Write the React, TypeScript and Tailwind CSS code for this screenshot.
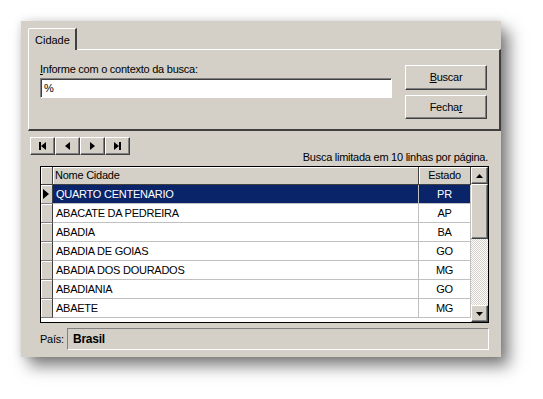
import React from "react";

const rows = [
  { nome: "QUARTO CENTENARIO", uf: "PR" },
  { nome: "ABACATE DA PEDREIRA", uf: "AP" },
  { nome: "ABADIA", uf: "BA" },
  { nome: "ABADIA DE GOIAS", uf: "GO" },
  { nome: "ABADIA DOS DOURADOS", uf: "MG" },
  { nome: "ABADIANIA", uf: "GO" },
  { nome: "ABAETE", uf: "MG" },
];

// classic raised 3d look
const raised =
  "bg-[#d4d0c8] border border-t-white border-l-white border-r-[#404040] border-b-[#404040] shadow-[inset_-1px_-1px_#808080]";

const NavIcon = ({ kind }: { kind: "first" | "prev" | "next" | "last" }) => (
  <svg width="9" height="8" viewBox="0 0 9 8" className="text-black">
    {kind === "first" && (
      <>
        <rect x="1" y="0" width="2" height="8" fill="currentColor" />
        <path d="M3 4 L8 0 L8 8 Z" fill="currentColor" />
      </>
    )}
    {kind === "prev" && <path d="M2 4 L7 0 L7 8 Z" fill="currentColor" />}
    {kind === "next" && <path d="M2 0 L7 4 L2 8 Z" fill="currentColor" />}
    {kind === "last" && (
      <>
        <path d="M1 0 L6 4 L1 8 Z" fill="currentColor" />
        <rect x="6" y="0" width="2" height="8" fill="currentColor" />
      </>
    )}
  </svg>
);

const ScrollBtn = ({ up }: { up?: boolean }) => (
  <div className={`h-[17px] w-full flex items-center justify-center ${raised}`}>
    <svg width="7" height="4" viewBox="0 0 7 4">
      <path d={up ? "M0 4 L3.5 0 L7 4 Z" : "M0 0 L7 0 L3.5 4 Z"} fill="black" />
    </svg>
  </div>
);

export default function App() {
  return (
    <div
      className="w-[543px] h-[399px] bg-white overflow-hidden pt-[21px] pl-[21px] text-[11px] tracking-[-0.25px] text-black"
      style={{ fontFamily: '"Liberation Sans", Arial, sans-serif' }}
    >
      <div className="w-[480px] h-[336px] bg-[#d4d0c8] shadow-[0_0_8px_rgba(0,0,0,0.12),8px_9px_15px_rgba(0,0,0,0.5)] flex flex-col">
        {/* tabs */}
        <div className="pl-[7px] pt-[7px]">
          <div className="flex h-[21px]">
            <div className="w-[49px] h-[22px] -mb-px relative z-10 bg-[#d4d0c8] border-t border-l border-white border-r-2 border-r-[#404040] rounded-tl-[2px] pl-[6px] pt-[3px] tracking-normal">
              Cidade
            </div>
          </div>
          <div className="w-[473px] h-[82px] border-t border-l border-white border-r-2 border-b-2 border-r-[#404040] border-b-[#404040] flex pl-[11px] pt-[12px]">
            <div className="w-[352px] flex flex-col">
              <div className="h-[16px] leading-[14px]">
                <span className="underline">I</span>nforme com o contexto da busca:
              </div>
              <div className="h-[20px] bg-white border border-t-[#808080] border-l-[#808080] border-r-white border-b-white shadow-[inset_1px_1px_#404040] pl-[3px] leading-[18px]">
                %
              </div>
            </div>
            <div className="ml-[13px] pt-[3px] flex flex-col gap-[5px]">
              <div className={`w-[82px] h-[25px] flex items-center justify-center ${raised}`}>
                <span className="underline">B</span>uscar
              </div>
              <div className={`w-[82px] h-[24px] flex items-center justify-center ${raised}`}>
                Fecha<span className="underline">r</span>
              </div>
            </div>
          </div>
        </div>

        {/* navigator + info */}
        <div className="flex items-start pl-[9px] pr-[13px] mt-[6px] h-[29px]">
          <div className="flex">
            {(["first", "prev", "next", "last"] as const).map((k) => (
              <div key={k} className={`w-[25px] h-[18px] flex items-center justify-center ${raised}`}>
                <NavIcon kind={k} />
              </div>
            ))}
          </div>
          <div className="ml-auto pt-[13px] leading-[14px]">Busca limitada em 10 linhas por página.</div>
        </div>

        {/* grid */}
        <div className="ml-[19px] w-[449px] h-[157px] border border-black bg-white flex">
          <div className="flex-1 flex flex-col">
            <div className="flex h-[18px]">
              <div className="w-[12px] bg-[#d4d0c8] border-r border-b border-[#404040] shadow-[inset_1px_1px_white]" />
              <div className="w-[366px] bg-[#d4d0c8] border-r border-b border-[#404040] shadow-[inset_1px_1px_white] pl-[2px] leading-[17px]">
                Nome Cidade
              </div>
              <div className="w-[52px] bg-[#d4d0c8] border-r border-b border-[#404040] shadow-[inset_1px_1px_white] text-center leading-[17px]">
                Estado
              </div>
            </div>
            {rows.map((r, i) => {
              const sel = i === 0;
              return (
                <div key={r.nome} className="flex h-[19px]">
                  <div className="w-[12px] bg-[#d4d0c8] border-r border-r-[#404040] border-b border-b-[#808080] shadow-[inset_1px_1px_white] flex items-center">
                    {sel && (
                      <svg width="6" height="10" viewBox="0 0 6 10" className="ml-[2px]">
                        <path d="M0 0 L6 5 L0 10 Z" fill="black" />
                      </svg>
                    )}
                  </div>
                  <div
                    className={`w-[366px] border-r border-b border-[#c0c0c0] pl-[3px] leading-[18px] ${
                      sel ? "bg-[#0a246a] text-white" : ""
                    }`}
                  >
                    {r.nome}
                  </div>
                  <div
                    className={`w-[52px] border-r border-b border-[#c0c0c0] text-center leading-[18px] ${
                      sel ? "bg-[#0a246a] text-white" : ""
                    }`}
                  >
                    {r.uf}
                  </div>
                </div>
              );
            })}
          </div>
          <div className="w-[17px] flex flex-col bg-[repeating-conic-gradient(#ffffff_0_25%,#d4d0c8_0_50%)] bg-size-[2px_2px]">
            <ScrollBtn up />
            <div className={`h-[55px] w-full ${raised}`} />
            <div className="flex-1" />
            <ScrollBtn />
          </div>
        </div>

        {/* pais */}
        <div className="flex items-center pl-[19px] mt-[5px]">
          <span className="w-[27px]">País:</span>
          <div className="w-[422px] h-[22px] border border-t-[#808080] border-l-[#808080] border-r-white border-b-white pl-[5px] font-bold text-[12px] leading-[20px]">
            Brasil
          </div>
        </div>
      </div>
    </div>
  );
}
